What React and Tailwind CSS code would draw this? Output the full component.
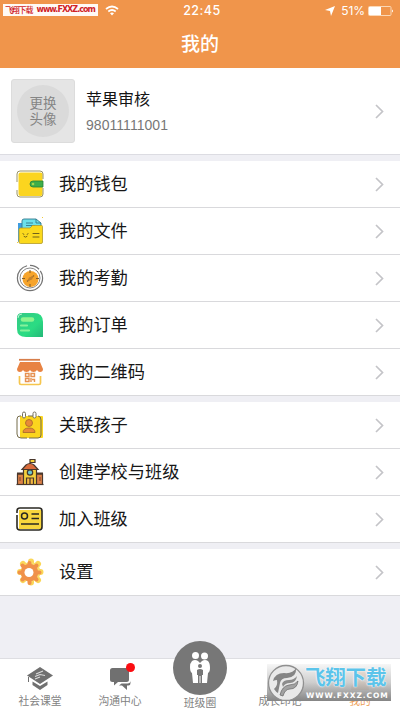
import React from 'react';

const WalletIcon = () => (
    <svg width="28" height="28" viewBox="0 0 28 28" fill="none">
        <rect x="2.500" y="2.500" width="24" height="23.500" rx="2" fill="#fbd51f" />
        <path d="M1 12V4q0-3 3-3h20q3 0 3 3v5M27 18v6q0 3-3 3H4q-3 0-3-3v-4" stroke="#8f8855" strokeWidth=".9" />
        <path d="M27 11H17a3 3 0 0 0 0 6h10z" fill="#3fae49" stroke="#24833a" strokeWidth=".8" />
        <circle cx="17" cy="14" r="1.300" fill="#a5d64a" />
    </svg>
);

const FilesIcon = () => (
    <svg width="28" height="28" viewBox="0 0 28 28" fill="none">
        <path d="M2 6h5v19H3q-1 0-1-1z" fill="#3f9de0" />
        <path d="M6 12V4q0-2 2-2h12l5 4v8H6z" fill="#6be0ec" stroke="#34788c" strokeWidth=".9" />
        <path d="M20 2v4h5M10 6h7M10 8.500h9" stroke="#34788c" strokeWidth=".9" />
        <path d="M4.500 11H14l2.500-2.500h9q1 0 1 1V25q0 1.500-1.500 1.500H4.500q-1.500 0-1.500-1.500V12.500Q3 11 4.500 11z" fill="#fbd91d" stroke="#b39a28" strokeWidth=".8" />
        <path d="M7 16.500l.8 1M12 16.500l-.8 1M8 19.500q1.500 1.500 3 0M17 16.500h6M17 20h6" stroke="#71621b" strokeWidth="1" strokeLinecap="round" />
        <path d="M26 1l1-1M1 26l1-1" stroke="#f1ca3b" />
    </svg>
);

const AttendanceIcon = () => (
    <svg width="28" height="28" viewBox="0 0 28 28" fill="none">
        <circle cx="14" cy="14" r="12.600" stroke="#747474" strokeWidth="1.200" strokeDasharray="56 3 10 2" />
        <circle cx="14" cy="14" r="10" stroke="#8a8a8a" strokeWidth="1" />
        <circle cx="14.500" cy="15" r="8" fill="#f6a42c" />
        <path d="M14 6v3M14 20v3M6 14.500h3M20 14.500h3M11 17.500l7-6" stroke="#85602b" strokeWidth="1.100" />
        <path d="M11 17.500l2-4 5-2-2 4z" fill="#c3822c" />
    </svg>
);

const OrderIcon = () => (
    <svg width="28" height="26" viewBox="0 0 28 26" fill="none">
        <defs>
            <linearGradient id="order" x1="0" y1="0" x2="1" y2="1">
                <stop offset="0" stopColor="#35c986" />
                <stop offset=".6" stopColor="#2bdc83" />
                <stop offset="1" stopColor="#24b779" />
            </linearGradient>
        </defs>
        <path d="M6 1h12q9 0 9 9v15H10q-9 0-9-8V6q0-5 5-5z" fill="url(#order)" />
        <path d="M7 7.500h9" stroke="#8df58f" strokeWidth="4.500" strokeLinecap="round" />
        <path d="M5 13.500h6M5 18.500h8" stroke="#86f19b" strokeWidth="2.200" strokeLinecap="round" />
        <path d="M2 6q0-4 4-4" stroke="#b4f4ce" />
    </svg>
);

const QrShopIcon = () => (
    <svg width="28" height="28" viewBox="0 0 28 28" fill="none">
        <path d="M3 1.800h21" stroke="#d77e4b" strokeWidth="1.800" />
        <path d="M4 4h20l3 7q0 3-3 3-2 0-3-2-1 2-3.500 2T14 12q-1 2-3.500 2T7 12q-1 2-3 2-3 0-3-3z" fill="#e88343" />
        <path d="M3.500 18v7q0 1.500 1.500 1.500h18q1.500 0 1.500-1.500v-7" stroke="#f6c64e" strokeWidth="1.700" />
        <path d="M9.500 15.500h3.500v3H9.500zM15 15.500h3.500v3H15zM9.500 20.500h3.500v3H9.500zM15 20v4M16 21.500h2.500V24" stroke="#e69151" strokeWidth="1.400" />
    </svg>
);

const ChildIcon = () => (
    <svg width="28" height="28" viewBox="0 0 28 28" fill="none">
        <rect x="4" y="5" width="23" height="22" rx="1" fill="#fbd51e" />
        <path d="M5 5H4Q1 5 1 8v15q0 4 4 4h6M13 27h9q3 0 3-3V9q0-4-3-4M12 5h5" stroke="#756c4a" strokeWidth="1" />
        <rect x="6.500" y="1" width="3" height="6" rx="1.500" fill="#fff" stroke="#75715d" />
        <rect x="17" y="1" width="3" height="6" rx="1.500" fill="#fff" stroke="#75715d" />
        <circle cx="13" cy="12" r="3.500" fill="#e88a37" stroke="#a3662c" strokeWidth=".8" />
        <path d="M7 21.500q0-4.500 6-4.500t6 4.500z" fill="#e88a37" stroke="#a3662c" strokeWidth=".8" />
    </svg>
);

const SchoolIcon = () => (
    <svg width="28" height="28" viewBox="0 0 28 28" fill="none" stroke="#49372c" strokeWidth="1.200">
        <path d="M14 7V1.500h5v3h-5" fill="#f6d43b" />
        <path d="M1.500 16h7v10.500h-7zM19.500 16h7v10.500h-7z" fill="#db8148" />
        <path d="M7.500 11.500h13v15h-13z" fill="#f4d03c" />
        <path d="M6 11.500L10 7q4-3 8 0l4 4.500z" fill="#d96b3b" />
        <path d="M1 15.500h7M20 15.500h7" strokeWidth="2" />
        <circle cx="14" cy="14.500" r="2.700" fill="#6dc8ce" />
        <path d="M10.500 26v-6h7v6M14 20v6" fill="#f3b543" />
        <path d="M4 19v4M24 19v4" stroke="#8d4c30" />
        <path d="M.5 26.500h27" />
    </svg>
);

const CardIcon = () => (
    <svg width="28" height="24" viewBox="0 0 28 24" fill="none">
        <rect x="3" y="3" width="23" height="19" fill="#f8d63d" />
        <path d="M1 6V4q0-3 3-3h19q3 0 3 3v16q0 3-3 3H4q-3 0-3-3V8" stroke="#2a2822" strokeWidth="1.600" />
        <circle cx="8.500" cy="9" r="3" stroke="#2a2822" strokeWidth="1.500" />
        <path d="M15.500 7H23M15.500 11.500H23M5 17h18" stroke="#2a2822" strokeWidth="1.500" />
    </svg>
);

const GearIcon = () => (
    <svg width="28" height="28" viewBox="0 0 28 28" fill="none">
        <g stroke="#fbd758" strokeWidth="6" strokeLinecap="round">
            <path d="M15 3.500v21M4 14h20.500M7 6l15 16M22 6L7 22" />
        </g>
        <circle cx="14.500" cy="14" r="10" fill="#fbdc6a" />
        <g stroke="#f0914a" strokeWidth="4" strokeLinecap="round">
            <path d="M13.500 5v20M3.500 14.500h20M6.500 7.500l14 14M20.500 7.500l-14 14" />
        </g>
        <circle cx="13.500" cy="14.500" r="8.700" fill="#f0914a" />
        <circle cx="13" cy="14.500" r="4.500" fill="#fff" />
    </svg>
);

const groups = [
    [
        { label: '我的钱包', icon: WalletIcon },
        { label: '我的文件', icon: FilesIcon },
        { label: '我的考勤', icon: AttendanceIcon },
        { label: '我的订单', icon: OrderIcon },
        { label: '我的二维码', icon: QrShopIcon },
    ],
    [
        { label: '关联孩子', icon: ChildIcon },
        { label: '创建学校与班级', icon: SchoolIcon },
        { label: '加入班级', icon: CardIcon },
    ],
    [{ label: '设置', icon: GearIcon }],
];

const Chevron = () => (
    <svg width="9" height="15" viewBox="0 0 9 15" fill="none" className="shrink-0">
        <path d="M1 1l6.500 6.500L1 14" stroke="#c4c4c8" strokeWidth="1.700" />
    </svg>
);

const StatusBar = () => (
    <div className="relative flex h-[22px] items-center justify-center text-[13px] text-white">
        <div className="absolute top-[4px] left-[3px] flex h-[12px] w-[95px] items-center justify-between bg-[#fffaf5] pr-[3px] pl-[2px] text-[8px] leading-none whitespace-nowrap text-[#d02328]">
            <span className="font-medium tracking-[-1.2px]">飞翔下载</span>
            <span className="font-['DejaVu_Sans','Noto_Sans_CJK_SC',sans-serif] text-[8px] font-bold tracking-[-0.95px]">www.FXXZ.com</span>
        </div>
        <svg width="14" height="11" viewBox="0 0 14 11" fill="none" className="absolute top-[5px] left-[105px]">
            <path d="M1 4q6-5 12 0M3.300 6.500q3.700-3 7.400 0" stroke="#fff" strokeWidth="1.700" />
            <path d="M5 8.300q2-1.500 4 0L7 10.500z" fill="#fff" />
        </svg>
        <span className="ml-[4px] text-[12.5px] font-medium tracking-[0.5px]">22:45</span>
        <div className="absolute top-0 right-[6px] flex h-[22px] items-center">
            <svg width="10" height="10" viewBox="0 0 10 10" className="mr-[6px]">
                <path d="M10 0L6 10 5 5 0 4z" fill="#fff" />
            </svg>
            <span className="mr-[3px] text-[12px] tracking-[-0.1px]">51%</span>
            <svg width="26" height="10" viewBox="0 0 26 10" fill="none">
                <rect x=".5" y=".5" width="22.500" height="9" rx="1" stroke="#fbd8b7" />
                <path d="M1 1h12v8H1z" fill="#fff" />
                <path d="M24 3.500q2 1.500 0 3z" fill="#fff" />
            </svg>
        </div>
    </div>
);

const MenuRow = ({ label, icon: Icon }) => (
    <div className="flex h-[47px] items-center border-b border-[#d9d9dc] bg-white px-[16px]">
        <div className="flex w-[28px] shrink-0 justify-center">
            <Icon />
        </div>
        <span className="ml-[15px] flex-1 text-[17.2px] leading-none text-[#171717]">{label}</span>
        <Chevron />
    </div>
);

const Tab = ({ label, children, className = 'text-[#828282]', labelClass = 'mt-[3px]' }) => (
    <div className={`flex h-full w-[80px] flex-col items-center ${className}`}>
        <div className="flex h-[33px] items-end justify-center">{children}</div>
        <span className={`text-[10.8px] leading-[13px] ${labelClass}`}>{label}</span>
    </div>
);

const Watermark = () => (
    <div className="absolute top-[5px] right-[9px] h-[37px] w-[124px] bg-gradient-to-b from-[#f5f5f5]/85 via-[#c8c8c8]/90 to-[#858585]">
        <svg width="38" height="38" viewBox="0 0 38 38" fill="none" className="absolute top-0 left-0">
            <circle cx="19" cy="19" r="17.500" fill="#e9e9e9" stroke="#909090" strokeWidth="1.300" />
            <path d="M6 17Q8 9 17 9q9 1 12-5 1 9-9 10-6 0-7 5l-2 10q-2-1-4-4 4-3 3-9-2 0-4 1z" fill="#858585" />
            <path d="M13 31q2-9 9-10 6 0 9-4-1 8-8 8-5 0-7 7z" fill="#a2a2a2" stroke="#666" strokeWidth=".7" />
            <path d="M15 20q1-4 7-4 5 0 8-4-1 7-7 7-5 0-7 4z" fill="#8c8c8c" />
        </svg>
        <div className="absolute top-[2px] left-[38px] text-[20.5px] leading-[23px] font-bold tracking-[-0.2px] whitespace-nowrap text-[#5cc4ea] [text-shadow:0_0_2px_#fff,0_0_1px_#fff]">
            飞翔下载
        </div>
        <div className="absolute top-[27px] left-[39px] font-['DejaVu_Sans',sans-serif] text-[7.5px] leading-[9px] font-bold tracking-[0.95px] whitespace-nowrap text-white">
            WWW.FXXZ.COM
        </div>
    </div>
);

const App = () => {
    return (
        <div className="flex h-[711px] w-[400px] flex-col overflow-hidden bg-[#efeff4] font-['Inter','Noto_Sans_CJK_SC',sans-serif]">
            <header className="h-[68px] shrink-0 bg-[#f0954b]">
                <StatusBar />
                <h1 className="mt-[12px] text-center text-[19px] leading-[22px] font-medium text-white">我的</h1>
            </header>

            {/* Profile */}
            <section className="flex h-[87px] shrink-0 items-center border-b border-[#dcdce2] bg-white pr-[16px] pl-[11px]">
                <div className="flex h-[64px] w-[64px] items-center justify-center rounded-[3px] border border-[#dcdcdc] bg-[#e5e5e5]">
                    <div className="flex h-[52px] w-[52px] items-center justify-center rounded-full bg-[#dadada] text-center text-[13.5px] leading-[16px] text-[#858585]">
                        更换
                        <br />
                        头像
                    </div>
                </div>
                <div className="ml-[11px] flex-1">
                    <div className="text-[16px] leading-[24px] text-[#151515]">苹果审核</div>
                    <div className="mt-[3px] font-['Liberation_Sans',sans-serif] text-[14px] leading-[22px] tracking-[0.05px] text-[#777]">98011111001</div>
                </div>
                <Chevron />
            </section>

            {groups.map((rows, i) => (
                <section key={i} className="mt-[6px] shrink-0">
                    {rows.map((row) => (
                        <MenuRow key={row.label} {...row} />
                    ))}
                </section>
            ))}

            {/* Bottom tabs */}
            <nav className="relative mt-auto flex h-[53px] shrink-0 border-t border-[#dedee2] bg-white">
                <Tab label="社会课堂">
                    <svg width="28" height="25" viewBox="0 0 28 25" fill="none" className="mb-[1px]">
                        <path d="M14 1l13 8.500L14 18 1 9.500z" fill="#707070" />
                        <path d="M6.500 15.500l7.500 4.500 7.500-4.500V19L14 24l-7.500-5z" fill="#707070" />
                        <path d="M2.500 11v5" stroke="#707070" />
                        <path d="M9 10.500l5-2 5 1M10 8l7-3M9 13l5-2" stroke="#dcdcdc" strokeWidth="1.100" />
                    </svg>
                </Tab>
                <Tab label="沟通中心">
                    <div className="relative">
                        <svg width="23" height="24" viewBox="0 0 23 24" fill="none" className="mb-[1px]">
                            <path d="M3.500 1h14q2.500 0 2.500 2.500v9q0 2.500-2.500 2.500H9l-4 3.500V15H3.500Q1 15 1 12.500v-9Q1 1 3.500 1z" fill="#707070" />
                            <path d="M21.500 6v10q0 2.500-2 2.500H18V23l-5-4.500h-3l2.500-2h6q3 0 3-3z" fill="#707070" />
                        </svg>
                        <span className="absolute -top-[4px] left-[17px] h-[9px] w-[9px] rounded-full bg-[#fb0d12]" />
                    </div>
                </Tab>
                <Tab label="班级圈" labelClass="mt-[5px]">
                    <div className="absolute -top-[18px] left-[173px] flex h-[54px] w-[54px] items-center justify-center rounded-full bg-[#777]">
                        <svg width="22" height="34" viewBox="0 0 22 34" fill="none">
                            <circle cx="6.500" cy="4.500" r="3.500" fill="#fff" />
                            <circle cx="15.500" cy="5" r="3.500" fill="#fff" />
                            <path d="M3 10q3-2 6 0l2 2 2-2q3-2 6 0 2 2 2 7 0 4-2 5l-1 10H4L3 22q-2-1-2-6 0-4 2-6z" fill="#fff" />
                            <circle cx="11" cy="15" r="2" fill="#777" />
                            <path d="M8 22v-3q3-2 6 0v5h-1v8H9v-8H8z" fill="#777" />
                            <path d="M11 25v7" stroke="#fff" />
                        </svg>
                    </div>
                </Tab>
                <Tab label="成长印记" />
                <Tab label="我的" className="text-[#eda057]">
                    <svg width="24" height="24" viewBox="0 0 24 24" fill="#ed954e">
                        <circle cx="12" cy="7" r="6" />
                        <path d="M3 22q0-9 9-9t9 9z" />
                    </svg>
                </Tab>
                <Watermark />
            </nav>
        </div>
    );
};

export default App;
